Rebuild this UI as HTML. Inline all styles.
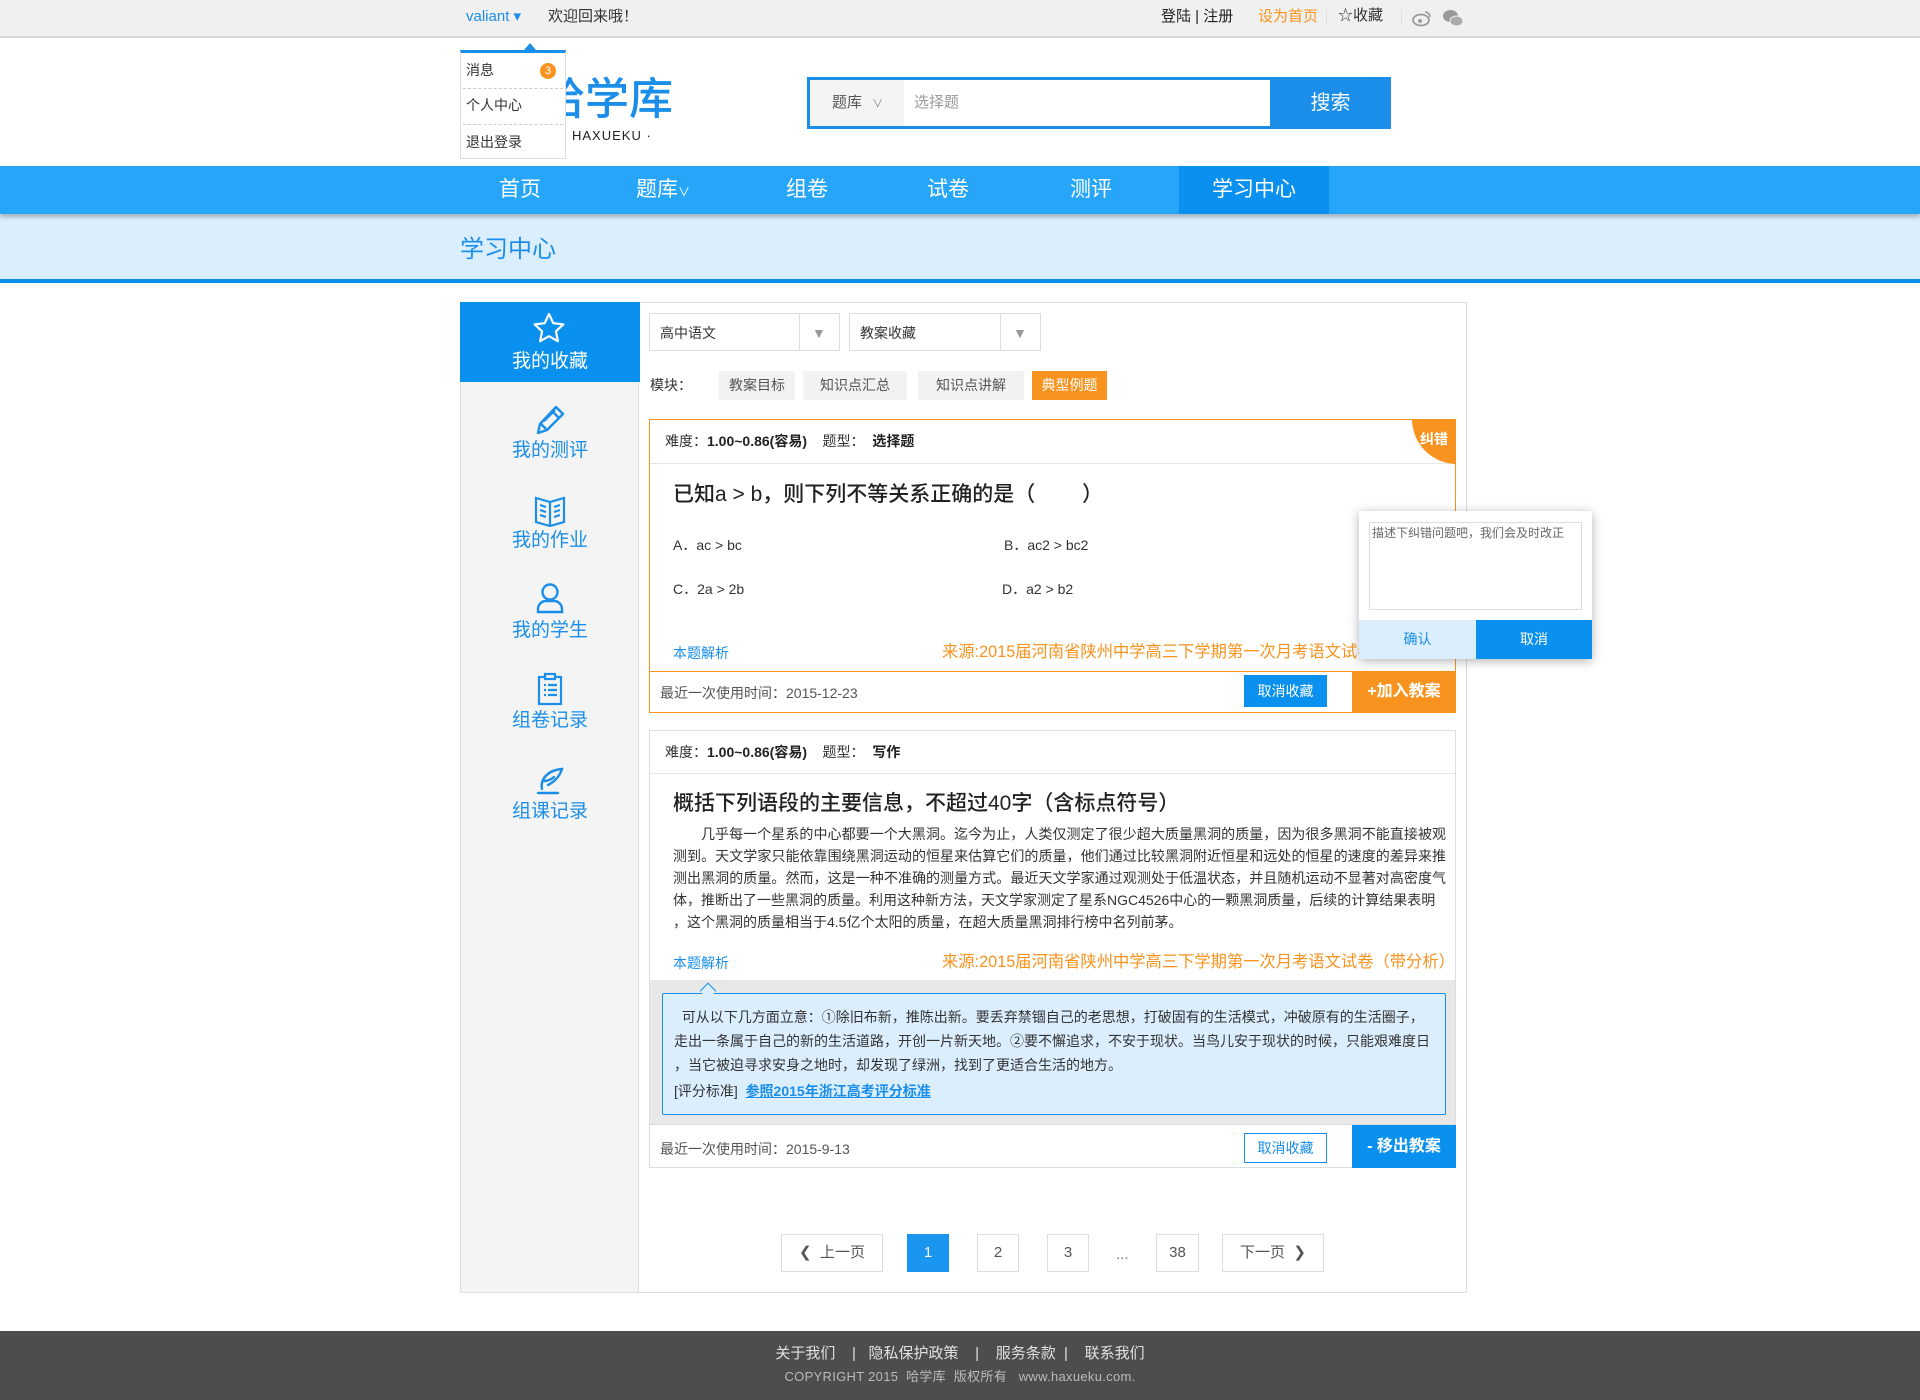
<!DOCTYPE html>
<html><head><meta charset="utf-8"><style>
*{margin:0;padding:0;box-sizing:border-box}
body{width:1920px;height:1400px;position:relative;background:#fff;font-family:"Liberation Sans","Noto Sans CJK SC",sans-serif;color:#333;overflow:hidden}
.a{position:absolute}
.t{white-space:nowrap;line-height:1}
</style></head><body>
<!-- top bar -->
<div class="a" style="left:0;top:0;width:1920px;height:38px;background:#f0f0f0;border-bottom:2px solid #d6d6d6"></div>
<div class="a t" style="left:466px;top:9px;font-size:15px;color:#1a8ee8">valiant ▾</div>
<div class="a t" style="left:548px;top:9px;font-size:15px;color:#333">欢迎回来哦！</div>
<div class="a t" style="left:1161px;top:9px;font-size:15px;color:#222">登陆 | 注册</div>
<div class="a t" style="left:1258px;top:9px;font-size:15px;color:#f7931e">设为首页</div>
<div class="a" style="left:1326px;top:10px;width:1px;height:16px;background:#ddd"></div>
<div class="a t" style="left:1338px;top:8px;font-size:15px;color:#333">☆收藏</div>
<div class="a" style="left:1401px;top:10px;width:1px;height:16px;background:#ddd"></div>
<svg class="a" style="left:1412px;top:9px" width="20" height="18" viewBox="0 0 20 18"><ellipse cx="9" cy="11" rx="8" ry="5.5" fill="none" stroke="#999" stroke-width="1.8"/><circle cx="8" cy="12" r="2" fill="#999"/><path d="M13 3a5 5 0 0 1 5 5" stroke="#999" stroke-width="1.6" fill="none"/></svg>
<svg class="a" style="left:1442px;top:8px" width="22" height="20" viewBox="0 0 22 20"><ellipse cx="8.5" cy="8" rx="7.5" ry="6" fill="#999"/><ellipse cx="14.5" cy="13" rx="6.5" ry="5" fill="#aaa" stroke="#f0f0f0" stroke-width="1"/></svg>
<!-- header -->
<div class="a t" style="left:541px;top:78px;font-size:44px;color:#1a8ee8;font-weight:500">哈学库</div>
<div class="a t" style="left:572px;top:129px;font-size:13px;color:#222;letter-spacing:1px">HAXUEKU ·</div>
<!-- dropdown -->
<div class="a" style="left:460px;top:50px;width:106px;height:109px;background:#fff;border:1px solid #ddd;border-top:3px solid #1a8ee8;z-index:2"></div>
<div class="a" style="left:524px;top:43px;width:0;height:0;border-left:6px solid transparent;border-right:6px solid transparent;border-bottom:7px solid #1a8ee8;z-index:2"></div>
<div class="a t" style="left:466px;top:63px;font-size:14px;color:#333;z-index:3">消息</div>
<div class="a t" style="left:540px;top:63px;width:16px;height:16px;border-radius:8px;background:#f7931e;color:#fff;font-size:11px;text-align:center;line-height:16px;z-index:3">3</div>
<div class="a" style="left:463px;top:88px;width:100px;border-top:1px dashed #ccc;z-index:3"></div>
<div class="a t" style="left:466px;top:98px;font-size:14px;color:#333;z-index:3">个人中心</div>
<div class="a" style="left:463px;top:124px;width:100px;border-top:1px dashed #ccc;z-index:3"></div>
<div class="a t" style="left:466px;top:135px;font-size:14px;color:#333;z-index:3">退出登录</div>
<!-- search -->
<div class="a" style="left:807px;top:77px;width:584px;height:52px;border:3px solid #1a8ee8;background:#fff"></div>
<div class="a" style="left:810px;top:80px;width:94px;height:46px;background:#f4f4f4"></div>
<div class="a t" style="left:832px;top:95px;font-size:15px;color:#555">题库 <span style="font-size:11px;color:#888;margin-left:6px">∨</span></div>
<div class="a t" style="left:914px;top:95px;font-size:15px;color:#999">选择题</div>
<div class="a" style="left:1270px;top:77px;width:121px;height:52px;background:#1a8ee8;color:#fff;font-size:20px;text-align:center;line-height:52px">搜索</div>
<!-- nav -->
<div class="a" style="left:0;top:166px;width:1920px;height:48px;background:#27a6f9;box-shadow:0 3px 4px rgba(0,0,0,.25)"></div>
<div class="a" style="left:1179px;top:166px;width:150px;height:48px;background:#0a90ee"></div>
<div class="a t" style="left:480px;top:179px;width:80px;text-align:center;font-size:21px;color:#fff">首页</div>
<div class="a t" style="left:623px;top:179px;width:80px;text-align:center;font-size:21px;color:#fff">题库<span style="font-size:12px">∨</span></div>
<div class="a t" style="left:767px;top:179px;width:80px;text-align:center;font-size:21px;color:#fff">组卷</div>
<div class="a t" style="left:908px;top:179px;width:80px;text-align:center;font-size:21px;color:#fff">试卷</div>
<div class="a t" style="left:1051px;top:179px;width:80px;text-align:center;font-size:21px;color:#fff">测评</div>
<div class="a t" style="left:1179px;top:179px;width:150px;text-align:center;font-size:21px;color:#fff">学习中心</div>
<!-- band -->
<div class="a" style="left:0;top:214px;width:1920px;height:69px;background:#dbeefe;border-bottom:4px solid #0a8ee8;z-index:-1"></div>
<div class="a t" style="left:460px;top:238px;font-size:24px;color:#1a8ee8">学习中心</div>
<!-- main container -->
<div class="a" style="left:460px;top:302px;width:1007px;height:991px;border:1px solid #ddd"></div>
<div class="a" style="left:461px;top:303px;width:178px;height:989px;background:#f4f4f4;border-right:1px solid #ddd"></div>
<div class="a" style="left:460px;top:302px;width:180px;height:80px;background:#0a90ee"></div>
<svg class="a" style="left:532px;top:312px" width="34" height="32" viewBox="0 0 34 32"><path d="M17 2l4.3 9.2 10 1.2-7.4 6.9 2 9.9L17 24.2 8.1 29.2l2-9.9-7.4-6.9 10-1.2z" fill="none" stroke="#fff" stroke-width="2.2" stroke-linejoin="round"/></svg>
<div class="a t" style="left:460px;top:352px;width:180px;text-align:center;font-size:19px;color:#fff">我的收藏</div>
<svg class="a" style="left:534px;top:404px" width="32" height="32" viewBox="0 0 32 32" fill="none" stroke="#1a8ee8" stroke-width="2.4" stroke-linejoin="round"><path d="M22 3l7 7-16 16-9 3 2-9z"/><path d="M18 7l7 7M7 20l5 5M10 17l11-11"/></svg>
<div class="a t" style="left:460px;top:441px;width:180px;text-align:center;font-size:19px;color:#1a8ee8">我的测评</div>
<svg class="a" style="left:534px;top:495px" width="32" height="32" viewBox="0 0 32 32" fill="none" stroke="#1a8ee8" stroke-width="2.2"><path d="M2 3l14 4 14-4v24l-14 4-14-4z"/><path d="M16 7v24M6 10l6 2M6 15l6 2M6 20l6 2M20 12l6-2M20 17l6-2M20 22l6-2"/></svg>
<div class="a t" style="left:460px;top:531px;width:180px;text-align:center;font-size:19px;color:#1a8ee8">我的作业</div>
<svg class="a" style="left:535px;top:582px" width="30" height="32" viewBox="0 0 30 32" fill="none" stroke="#1a8ee8" stroke-width="2.4"><circle cx="15" cy="10" r="7.5"/><path d="M3 30v-3a8 8 0 0 1 8-8h8a8 8 0 0 1 8 8v3z"/></svg>
<div class="a t" style="left:460px;top:621px;width:180px;text-align:center;font-size:19px;color:#1a8ee8">我的学生</div>
<svg class="a" style="left:536px;top:672px" width="28" height="34" viewBox="0 0 28 34" fill="none" stroke="#1a8ee8" stroke-width="2.2"><rect x="3" y="5" width="22" height="27"/><rect x="9" y="2" width="10" height="5" fill="#f4f4f4"/><path d="M8 13h2M12 13h9M8 18h2M12 18h9M8 23h2M12 23h9"/></svg>
<div class="a t" style="left:460px;top:711px;width:180px;text-align:center;font-size:19px;color:#1a8ee8">组卷记录</div>
<svg class="a" style="left:534px;top:765px" width="32" height="32" viewBox="0 0 32 32" fill="none" stroke="#1a8ee8" stroke-width="2.4" stroke-linecap="round"><path d="M8 24C6 14 14 5 28 4c-2 6-6 12-14 16M10 16c4 0 8-2 10-4"/><path d="M4 28h20"/></svg>
<div class="a t" style="left:460px;top:802px;width:180px;text-align:center;font-size:19px;color:#1a8ee8">组课记录</div>
<!-- selects -->
<div class="a" style="left:649px;top:313px;width:191px;height:38px;border:1px solid #ddd;background:#fff"></div>
<div class="a" style="left:799px;top:314px;width:1px;height:36px;background:#ddd"></div>
<div class="a t" style="left:660px;top:326px;font-size:14px;color:#333">高中语文</div>
<div class="a t" style="left:812px;top:326px;font-size:14px;color:#999">▼</div>
<div class="a" style="left:849px;top:313px;width:192px;height:38px;border:1px solid #ddd;background:#fff"></div>
<div class="a" style="left:1000px;top:314px;width:1px;height:36px;background:#ddd"></div>
<div class="a t" style="left:860px;top:326px;font-size:14px;color:#333">教案收藏</div>
<div class="a t" style="left:1013px;top:326px;font-size:14px;color:#999">▼</div>
<div class="a t" style="left:650px;top:378px;font-size:14px;color:#333">模块：</div>
<div class="a t" style="left:719px;top:371px;width:76px;height:29px;line-height:29px;text-align:center;background:#f2f2f2;font-size:14px;color:#555">教案目标</div>
<div class="a t" style="left:803px;top:371px;width:104px;height:29px;line-height:29px;text-align:center;background:#f2f2f2;font-size:14px;color:#555">知识点汇总</div>
<div class="a t" style="left:918px;top:371px;width:106px;height:29px;line-height:29px;text-align:center;background:#f2f2f2;font-size:14px;color:#555">知识点讲解</div>
<div class="a t" style="left:1032px;top:371px;width:75px;height:29px;line-height:29px;text-align:center;background:#f7931e;font-size:14px;color:#fff">典型例题</div>
<!-- card1 -->
<div class="a" style="left:649px;top:419px;width:807px;height:294px;border:1px solid #f7931e;overflow:hidden">
 <div class="a" style="left:0;top:43px;width:807px;height:1px;background:#e5e5e5"></div>
 <div class="a" style="left:762px;top:-46px;width:90px;height:90px;border-radius:45px;background:#f7931e"></div>
 <div class="a t" style="left:770px;top:12px;font-size:14px;color:#fff;font-weight:bold">纠错</div>
 <div class="a" style="left:0;top:251px;width:807px;height:1px;background:#f7931e"></div>
</div>
<div class="a t" style="left:665px;top:434px;font-size:14px;color:#333">难度：<b style="color:#222">1.00~0.86(容易)</b>&nbsp;&nbsp;&nbsp;&nbsp;题型：&nbsp;&nbsp;<b style="color:#222">选择题</b></div>
<div class="a t" style="left:673px;top:484px;font-size:21px;color:#222;font-weight:500">已知a &gt; b，则下列不等关系正确的是（&nbsp;&nbsp;&nbsp;&nbsp;&nbsp;&nbsp;&nbsp;&nbsp;）</div>
<div class="a t" style="left:673px;top:538px;font-size:14px;color:#333">A．ac &gt; bc</div>
<div class="a t" style="left:1004px;top:538px;font-size:14px;color:#333">B．ac2 &gt; bc2</div>
<div class="a t" style="left:673px;top:582px;font-size:14px;color:#333">C．2a &gt; 2b</div>
<div class="a t" style="left:1002px;top:582px;font-size:14px;color:#333">D．a2 &gt; b2</div>
<div class="a t" style="left:673px;top:646px;font-size:14px;color:#1a8ee8">本题解析</div>
<div class="a t" style="left:942px;top:644px;font-size:16.3px;color:#f7931e">来源:2015届河南省陕州中学高三下学期第一次月考语文试卷（带分析）</div>
<div class="a t" style="left:660px;top:686px;font-size:14px;color:#555">最近一次使用时间：2015-12-23</div>
<div class="a t" style="left:1244px;top:675px;width:83px;height:32px;line-height:32px;text-align:center;background:#0a90ee;color:#fff;font-size:14px">取消收藏</div>
<div class="a t" style="left:1352px;top:671px;width:104px;height:42px;line-height:42px;text-align:center;background:#f7931e;color:#fff;font-size:16px;font-weight:bold">+加入教案</div>
<!-- popup -->
<div class="a" style="left:1359px;top:511px;width:233px;height:148px;background:#fff;box-shadow:0 2px 10px rgba(0,0,0,.3);z-index:5">
 <div class="a" style="left:10px;top:11px;width:213px;height:88px;border:1px solid #ddd"></div>
 <div class="a t" style="left:13px;top:16px;font-size:12px;color:#666">描述下纠错问题吧，我们会及时改正</div>
 <div class="a t" style="left:0;top:109px;width:117px;height:39px;line-height:39px;text-align:center;background:#dbeefe;color:#1a8ee8;font-size:14px">确认</div>
 <div class="a t" style="left:117px;top:109px;width:116px;height:39px;line-height:39px;text-align:center;background:#0a90ee;color:#fff;font-size:14px">取消</div>
</div>
<!-- card2 -->
<div class="a" style="left:649px;top:730px;width:807px;height:438px;border:1px solid #ddd">
 <div class="a" style="left:0;top:42px;width:805px;height:1px;background:#e5e5e5"></div>
 <div class="a" style="left:0;top:249px;width:805px;height:144px;background:#e8e8e8"></div>
 <div class="a" style="left:12px;top:262px;width:784px;height:122px;background:#dbeefe;border:1px solid #1a8ee8;border-radius:2px"></div>
 <div class="a" style="left:52px;top:254px;width:12px;height:12px;background:#dbeefe;border-left:1px solid #1a8ee8;border-top:1px solid #1a8ee8;transform:rotate(45deg)"></div>
 <div class="a" style="left:0;top:393px;width:805px;height:1px;background:#ddd"></div>
</div>
<div class="a t" style="left:665px;top:745px;font-size:14px;color:#333">难度：<b style="color:#222">1.00~0.86(容易)</b>&nbsp;&nbsp;&nbsp;&nbsp;题型：&nbsp;&nbsp;<b style="color:#222">写作</b></div>
<div class="a t" style="left:673px;top:793px;font-size:21px;color:#222;font-weight:500">概括下列语段的主要信息，不超过40字（含标点符号）</div>
<div class="a" style="left:673px;top:823px;width:773px;font-size:14px;line-height:22px;color:#333;text-indent:28px;text-align:justify">几乎每一个星系的中心都要一个大黑洞。迄今为止，人类仅测定了很少超大质量黑洞的质量，因为很多黑洞不能直接被观测到。天文学家只能依靠围绕黑洞运动的恒星来估算它们的质量，他们通过比较黑洞附近恒星和远处的恒星的速度的差异来推测出黑洞的质量。然而，这是一种不准确的测量方式。最近天文学家通过观测处于低温状态，并且随机运动不显著对高密度气体，推断出了一些黑洞的质量。利用这种新方法，天文学家测定了星系NGC4526中心的一颗黑洞质量，后续的计算结果表明<br>，这个黑洞的质量相当于4.5亿个太阳的质量，在超大质量黑洞排行榜中名列前茅。</div>
<div class="a t" style="left:673px;top:956px;font-size:14px;color:#1a8ee8">本题解析</div>
<div class="a t" style="left:942px;top:954px;font-size:16.3px;color:#f7931e">来源:2015届河南省陕州中学高三下学期第一次月考语文试卷（带分析）</div>
<div class="a" style="left:674px;top:1005px;white-space:nowrap;font-size:14px;line-height:24px;color:#333">&nbsp;&nbsp;可从以下几方面立意：①除旧布新，推陈出新。要丢弃禁锢自己的老思想，打破固有的生活模式，冲破原有的生活圈子，<br>走出一条属于自己的新的生活道路，开创一片新天地。②要不懈追求，不安于现状。当鸟儿安于现状的时候，只能艰难度日<br>，当它被迫寻求安身之地时，却发现了绿洲，找到了更适合生活的地方。</div>
<div class="a t" style="left:674px;top:1084px;font-size:14px;color:#333">[评分标准]&nbsp;&nbsp;<b style="color:#1a8ee8;text-decoration:underline">参照2015年浙江高考评分标准</b></div>
<div class="a t" style="left:660px;top:1142px;font-size:14px;color:#555">最近一次使用时间：2015-9-13</div>
<div class="a t" style="left:1244px;top:1133px;width:83px;height:30px;line-height:28px;text-align:center;background:#fff;border:1px solid #1a8ee8;color:#1a8ee8;font-size:14px">取消收藏</div>
<div class="a t" style="left:1352px;top:1125px;width:104px;height:43px;line-height:43px;text-align:center;background:#0a90ee;color:#fff;font-size:16px;font-weight:bold">- 移出教案</div>
<!-- pagination -->
<div class="a t" style="left:781px;top:1234px;width:102px;height:38px;line-height:36px;text-align:center;border:1px solid #ddd;font-size:15px;color:#555">❮&nbsp; 上一页</div>
<div class="a t" style="left:907px;top:1234px;width:42px;height:38px;line-height:38px;text-align:center;background:#1a96f0;font-size:15px;color:#fff">1</div>
<div class="a t" style="left:977px;top:1234px;width:42px;height:38px;line-height:36px;text-align:center;border:1px solid #ddd;font-size:15px;color:#555">2</div>
<div class="a t" style="left:1047px;top:1234px;width:42px;height:38px;line-height:36px;text-align:center;border:1px solid #ddd;font-size:15px;color:#555">3</div>
<div class="a t" style="left:1116px;top:1247px;font-size:15px;color:#777">...</div>
<div class="a t" style="left:1156px;top:1234px;width:43px;height:38px;line-height:36px;text-align:center;border:1px solid #ddd;font-size:15px;color:#555">38</div>
<div class="a t" style="left:1222px;top:1234px;width:102px;height:38px;line-height:36px;text-align:center;border:1px solid #ddd;font-size:15px;color:#555">下一页 &nbsp;❯</div>
<!-- footer -->
<div class="a" style="left:0;top:1331px;width:1920px;height:69px;background:#4d4d4d"></div>
<div class="a t" style="left:0;top:1346px;width:1920px;text-align:center;font-size:15px;color:#e0e0e0">关于我们 &nbsp;&nbsp;&nbsp;|&nbsp;&nbsp; 隐私保护政策 &nbsp;&nbsp;&nbsp;|&nbsp;&nbsp;&nbsp; 服务条款 &nbsp;|&nbsp;&nbsp;&nbsp; 联系我们</div>
<div class="a t" style="left:0;top:1370px;width:1920px;text-align:center;font-size:13px;color:#bbb;letter-spacing:0.3px">COPYRIGHT 2015 &nbsp;哈学库 &nbsp;版权所有 &nbsp;&nbsp;www.haxueku.com.</div>
</body></html>
